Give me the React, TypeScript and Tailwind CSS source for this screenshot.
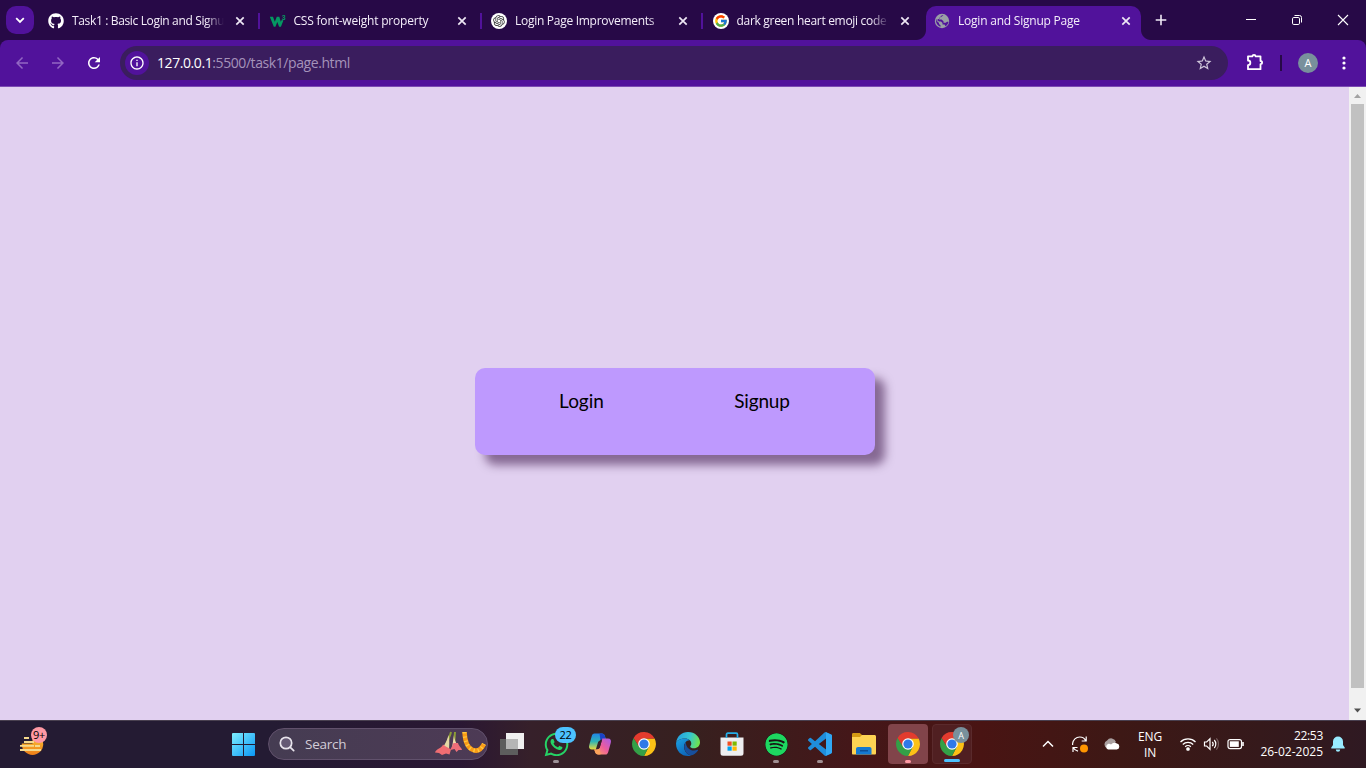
import type { ReactNode } from "react";
import { FaGithub, FaSpotify, FaWhatsapp } from "react-icons/fa";
import { FcGoogle } from "react-icons/fc";
import { RiOpenaiFill } from "react-icons/ri";
import { MdArrowBack, MdArrowForward, MdRefresh, MdInfoOutline, MdStarBorder } from "react-icons/md";

function Cross({ className }: { className: string }) {
  return (
    <svg className={className} viewBox="0 0 16 16" fill="none" stroke="currentColor" strokeWidth="1.7">
      <path d="M4.3 4.3 11.7 11.7M11.7 4.3 4.3 11.7" />
    </svg>
  );
}

function Globe() {
  return (
    <svg className="size-4" viewBox="0 0 16 16">
      <circle cx="8" cy="8" r="7.2" fill="#9aa0a6" />
      <path d="M9.500 2.300H8L6.500 3.500v1.300H5v1.700H7.500l2 1.700v1.500h2.300l1.200-1h1.500c-.3 1.900-1.400 3.600-3 4.500l-1-1.800H8.500V10L7 8.500H5L2 6.300C1.600 9.500 3.300 12.700 6.500 13.700v-1.500L5 11v-1L2.300 7.500z" fill="#51129b" />
    </svg>
  );
}

function W3() {
  return (
    <svg className="h-4 w-[17px] overflow-visible" viewBox="0 0 17 16">
      <path d="M.8 3.800H4l1.800 5 2-5h2.500l1.500 5 1-2.100 1.600.9-2.500 6.100h-1.800L8.300 9.100l-1.900 4.600H4.800z" fill="#059862" />
      <text x="12.800" y="7" fontSize="7" fontWeight="700" fill="#059862" fontFamily="Liberation Sans, sans-serif">3</text>
    </svg>
  );
}

function Tab({ icon, title, divider, tracking }: { icon: ReactNode; title: string; divider?: boolean; tracking: string }) {
  return (
    <div className="flex h-[34px] w-[221.5px] shrink-0 items-center pb-[5px] pl-[9px]">
      <span className="flex size-4 shrink-0 items-center justify-center">{icon}</span>
      <span className={`ml-2 w-[153px] whitespace-nowrap text-[12px] font-medium leading-4 text-[#f4eefa] [mask-image:linear-gradient(to_right,#000_134px,transparent_152px)] ${tracking}`}>
        {title}
      </span>
      <Cross className="ml-[7px] size-4 shrink-0 text-[#eee7f5]" />
      {divider && <span className="ml-[10px] h-4 w-[2px] shrink-0 bg-[#51129b]" />}
    </div>
  );
}

function TabStrip() {
  return (
    <div className="flex h-10 bg-[#270947] pt-[6px]">
      <button className="ml-[6px] mr-[5px] flex size-7 shrink-0 items-center justify-center rounded-[10px] bg-[#51129b]">
        <svg className="size-4" viewBox="0 0 16 16" fill="none" stroke="#fff" strokeWidth="1.8"><path d="m4.2 6.2 3.8 3.7 3.8-3.7" /></svg>
      </button>
      <Tab icon={<FaGithub className="size-4 text-white" />} title="Task1 : Basic Login and Signu" divider tracking="tracking-[-0.35px]" />
      <Tab icon={<W3 />} title="CSS font-weight property" divider tracking="tracking-[-0.2px]" />
      <Tab
        icon={<span className="flex size-4 items-center justify-center rounded-full bg-white"><RiOpenaiFill className="size-3.5 text-[#333]" /></span>}
        title="Login Page Improvements" divider tracking="tracking-[-0.28px]"
      />
      <Tab
        icon={<span className="flex size-4 items-center justify-center rounded-full bg-white"><FcGoogle className="size-[14px]" /></span>}
        title="dark green heart emoji code" tracking="tracking-[-0.3px]"
      />
      <div className="relative ml-px w-[215px] shrink-0 rounded-t-[10px] bg-[#51129b]">
        <div className="absolute bottom-0 left-[-10px] size-[10px] bg-[radial-gradient(circle_at_0_0,transparent_9.5px,#51129b_10.5px)]" />
        <div className="absolute bottom-0 right-[-10px] size-[10px] bg-[radial-gradient(circle_at_100%_0,transparent_9.5px,#51129b_10.5px)]" />
        <div className="-ml-px"><Tab icon={<Globe />} title="Login and Signup Page" tracking="tracking-[-0.22px]" /></div>
      </div>
      <svg className="ml-3 mt-[6px] size-4 shrink-0" viewBox="0 0 16 16" stroke="#f0eaf6" strokeWidth="1.6"><path d="M8 2.700v10.600M2.700 8h10.600" /></svg>
      <div className="ml-auto flex h-7 shrink-0 items-center text-white">
        <svg className="h-7 w-[46px]" viewBox="0 0 46 28" stroke="currentColor"><path d="M18 13.500h10" /></svg>
        <svg className="h-7 w-[46px]" viewBox="0 0 46 28" stroke="currentColor" fill="none"><rect x="18.500" y="11.500" width="7" height="7" rx="1.300" /><path d="M20.500 9.500h5a2 2 0 0 1 2 2v5" /></svg>
        <svg className="h-7 w-[46px]" viewBox="0 0 46 28" stroke="currentColor" strokeWidth="1.100"><path d="m18 9 10 10M28 9 18 19" /></svg>
      </div>
    </div>
  );
}

function Toolbar() {
  return (
    <div className="bg-[#270947]">
      <div className="flex h-[47px] items-center rounded-t-[8px] border-b border-[#7c4bb3] bg-[#51129b]">
        <MdArrowBack className="ml-[13px] size-[18px] text-[#9267c3]" />
        <MdArrowForward className="ml-[18px] size-[18px] text-[#9267c3]" />
        <MdRefresh className="ml-[18px] size-[18px] text-white" />
        <div className="ml-[17px] flex h-[34px] w-[1108px] items-center rounded-full bg-[#3a1d5e] pl-[5px]">
          <span className="flex size-6 items-center justify-center rounded-full bg-[#51129b]">
            <MdInfoOutline className="size-4 text-white" />
          </span>
          <span className="ml-2 whitespace-nowrap text-[14px] leading-5 tracking-[-0.42px] text-[#a593ba]">
            <span className="text-white">127.0.0.1</span>:5500/task1/page.html
          </span>
          <MdStarBorder className="ml-auto mr-[15px] size-[18px] text-[#cfc5da]" />
        </div>
        <svg className="ml-[17px] size-5" viewBox="0 0 20 20" fill="none" stroke="#fff" strokeWidth="1.800" strokeLinejoin="round">
          <path d="M3 3.300h4.500a1.500 1.500 0 0 1 3 0h5v4.700a1.600 1.600 0 0 1 0 3.200v5H3v-4a2.300 2.300 0 0 0 0-4.700z" />
        </svg>
        <span className="ml-[15px] h-4 w-[2px] bg-[#270947]" />
        <span className="ml-4 flex size-5 items-center justify-center rounded-full bg-[#78909c] pb-px text-[11px] leading-none text-white">A</span>
        <svg className="ml-[18px] size-4" viewBox="0 0 16 16" fill="#fff"><circle cx="8" cy="3" r="1.600" /><circle cx="8" cy="8" r="1.600" /><circle cx="8" cy="13" r="1.600" /></svg>
      </div>
    </div>
  );
}

function Chrome() {
  return (
    <svg className="size-6" viewBox="0 0 24 24">
      <path d="M12 6.400h10.600A12 12 0 0 1 12 24l4.800-9.200z" fill="#fbc116" />
      <path d="M1.610 6 7.200 14.800l4.800 2.800 4.800-2.800L12 24A12 12 0 0 1 1.610 6z" fill="#34a047" />
      <path d="M1.610 6A12 12 0 0 1 22.600 6.400H12L7.200 14.800z" fill="#e33b2e" />
      <circle cx="12" cy="12" r="5.800" fill="#fff" />
      <circle cx="12" cy="12" r="4.600" fill="#3079e8" />
    </svg>
  );
}

function Edge() {
  return (
    <svg className="size-6" viewBox="0 0 24 24">
      <defs>
        <linearGradient id="edgeTop" x1="0" y1="0.3" x2="1" y2="0.5"><stop offset="0" stopColor="#249fe0" /><stop offset=".55" stopColor="#35c6cf" /><stop offset="1" stopColor="#70e34a" /></linearGradient>
        <linearGradient id="edgeBody" x1="0" y1="0" x2="0.6" y2="1"><stop offset="0" stopColor="#1ba1e2" /><stop offset="1" stopColor="#0d65b8" /></linearGradient>
      </defs>
      <path d="M.1 10.800C.7 4.500 5.800 0 12 0c7 0 12 5 12 10.300 0 3.700-2.800 6-6 6-2.300 0-3.800-.8-3.800-1.800 0-.7 1.100-1.200 1.100-3 0-2.600-2.600-5-6.300-5C4.800 6.500 1.200 8.200.1 10.800z" fill="url(#edgeTop)" />
      <path d="M.1 10.800C1.200 8.200 4.800 6.500 8.800 6.500c2 0 3.600.7 4.800 1.700-2.800-.2-5.600 2.800-5.600 6.600 0 4.200 3.300 8.300 7.500 8.700-1.100.4-2.300.5-3.500.5C5 24-.5 18.200.1 10.800z" fill="url(#edgeBody)" />
      <path d="M9.800 10.200C7 13.500 8 20 12.500 22.500c3 1.700 6.500.2 9.500-4.100.3-.5-.1-.8-.6-.6-5.300 2.400-11.400-1-11.600-7.600z" fill="#174f9c" />
    </svg>
  );
}

function Copilot() {
  return (
    <svg className="size-6" viewBox="0 0 24 24">
      <defs>
        <linearGradient id="cpA" x1="0" y1="0" x2="0" y2="1"><stop offset="0" stopColor="#2086e8" /><stop offset=".5" stopColor="#2fb3b5" /><stop offset="1" stopColor="#ecd93b" /></linearGradient>
        <linearGradient id="cpB" x1="1" y1="0" x2="0" y2="1"><stop offset="0" stopColor="#a55bea" /><stop offset=".5" stopColor="#ed5c9c" /><stop offset="1" stopColor="#ffac5a" /></linearGradient>
      </defs>
      <path d="M6.500 1.500h7.300c1.800 0 2.600.9 3.100 2.500L18 8h-2.800c-1.800 0-2.700.8-3.200 2.500L9.700 17.500H4c-2.500 0-3.500-1.800-2.800-4.200l2.500-9C4.200 2.400 5 1.500 6.500 1.500z" fill="url(#cpA)" />
      <path d="M11.500 1.500h2.300c1.800 0 2.600.9 3.100 2.500L18 8h-2.800c-1.200 0-2 .4-2.600 1.200z" fill="#1b42c8" />
      <path d="M17.500 22.500h-7.300c-1.800 0-2.600-.9-3.100-2.500l-.9-2.500h2.600c1.800 0 2.700-.8 3.200-2.500L14.300 6.500H20c2.500 0 3.500 1.800 2.800 4.200l-2.500 9c-.5 1.900-1.300 2.800-2.800 2.800z" fill="url(#cpB)" />
      <path d="m10.200 9.800 1-.9c1-.9 2-1.300 3-1.300l-2.400 7.500c-.5 1.600-1.300 2.200-2.600 2.400H7.800z" fill="#35202a" />
      <path d="M12.500 22.500h-2.300c-1.800 0-2.600-.9-3.100-2.500l-.9-2.500h2.600c1.300 0 2.200-.4 2.700-1.400z" fill="#fba35a" />
    </svg>
  );
}

function Store() {
  return (
    <svg className="mr-px h-6 w-6" viewBox="0 0 24 24">
      <path d="M.5 5.500h23v15.700a2.500 2.500 0 0 1-2.500 2.500H3a2.500 2.500 0 0 1-2.500-2.500z" fill="#eeeef0" />
      <path d="M6.500 6V2.500c0-.8.500-1.300 1.300-1.300h8.400c.8 0 1.300.5 1.300 1.300V6" fill="none" stroke="#25aee8" strokeWidth="1.700" />
      <path d="M7.500 9.500h4.200v4.200H7.500z" fill="#f25022" /><path d="M12.500 9.500h4.200v4.200h-4.200z" fill="#7fba00" />
      <path d="M7.500 14.500h4.200v4.200H7.500z" fill="#00a4ef" /><path d="M12.500 14.500h4.200v4.200h-4.200z" fill="#ffb900" />
    </svg>
  );
}

function Folder() {
  return (
    <svg className="size-6" viewBox="0 0 24 24">
      <path d="M0 2.500C0 1.700.5 1 1.300 1h6.500L10 3v5H0z" fill="#d49a14" />
      <path d="M0 5h8l2-2h12.500c.9 0 1.500.6 1.500 1.500v17c0 .5-.5 1-1 1H1c-.6 0-1-.5-1-1z" fill="#fdd353" />
      <path d="M4 22.500V17c0-1.200.8-2 2-2h11.500c1.200 0 2 .8 2 2v5.500z" fill="#1479d1" /><path d="M8 18h8v1.500H8z" fill="#0b4f98" />
    </svg>
  );
}

function Code() {
  return (
    <svg className="size-6" viewBox="0 0 24 24" fill="#1f8ddb">
      <path d="M23.15 2.587L18.21.21a1.494 1.494 0 0 0-1.705.29l-9.46 8.63-4.12-3.128a.999.999 0 0 0-1.276.057L.327 7.261A1 1 0 0 0 .326 8.74L3.899 12 .326 15.26a1 1 0 0 0 .001 1.479L1.65 17.94a.999.999 0 0 0 1.276.057l4.12-3.128 9.46 8.63a1.492 1.492 0 0 0 1.704.29l4.942-2.377A1.5 1.5 0 0 0 24 20.06V3.939a1.5 1.5 0 0 0-.85-1.352zm-5.146 14.861L10.826 12l7.178-5.448v10.896z" />
      <path d="m18 .2 5.100 2.400c.6.300.9.800.9 1.400v16c0 .6-.3 1.100-.9 1.400L18 23.800z" fill="#30a8f4" />
    </svg>
  );
}

function Weather() {
  return (
    <svg className="size-6" viewBox="0 0 24 24">
      <defs><linearGradient id="sun" x1="0" y1="0" x2="0" y2="1"><stop offset="0" stopColor="#fccb38" /><stop offset="1" stopColor="#ee7e18" /></linearGradient></defs>
      <circle cx="12.500" cy="12.300" r="10.700" fill="url(#sun)" />
      <path d="M0 0h12.500v11.500H0z" fill="#241b33" />
      <path d="M4 6h5M4 10h10M15 14h5M0 13.800h14M0 18h21" stroke="#f5d98c" strokeWidth="1.800" />
    </svg>
  );
}

function Flowers() {
  return (
    <svg className="h-7 w-[52px]" viewBox="0 0 52 28" fill="none">
      <path d="M16 2c-1 5-4 9-6 16M20 2l-1 14" stroke="#8c9c35" strokeWidth="2" />
      <path d="M13.500 5c1.500 5 .500 11 .5 17l-6-1-5 1c5-4 8.500-9 10.500-17z" fill="#e5d8a4" />
      <path d="M8 14.500c-1 3.500-7 4.500-8 8l4 .5 3 2 4-1.500 3.500 1 1.500-5c-1-1-4-2-8-5z" fill="#f06d72" />
      <path d="M19 5c0 5 3 9 5 13h-7z" fill="#eedcad" />
      <path d="M18.500 13c-1 3-3 5-3 7l4-1 2 3 2-2 3.500 0c0-2-3.500-4-4-7z" fill="#ee6e79" />
      <path d="M29.500 2c.5 10 3 16 8.500 18 5 2 8.500-1 11-6" stroke="#f99b16" strokeWidth="4.500" />
      <path d="M29.500 2c.5 10 3 16 8.500 18 5 2 8.500-1 11-6" stroke="#ffc940" strokeWidth="4" strokeDasharray="1.300 3" />
    </svg>
  );
}

function Slot({ children, box, mark }: { children: ReactNode; box?: string; mark?: string }) {
  return (
    <div className={`relative flex size-10 shrink-0 items-center justify-center rounded-[4px] ${box ?? ""}`}>
      {children}
      {mark && <span className={`absolute bottom-px h-[3px] rounded-full ${mark}`} />}
    </div>
  );
}

function Taskbar() {
  return (
    <div className="flex h-12 items-center border-t border-[#494050] bg-[linear-gradient(90deg,#241b33_0,#241b33_270px,#2a1733_460px,#36202a_530px,#37201f_690px,#441719_850px,#491413_980px,#3d1815_1120px,#35191b_1260px,#2f1922_1366px)] pb-px text-white">
      <div className="relative ml-5 size-6">
        <Weather />
        <span className="absolute left-[11px] top-[-5px] flex size-4 items-center justify-center rounded-full bg-[#ff99a4] pb-px text-[11px] leading-none tracking-[-0.300px] text-black">9+</span>
      </div>
      <div className="ml-[180px] flex items-center gap-1">
        <Slot>
          <svg className="mr-px size-[23px]" viewBox="0 0 23 23">
            <defs><linearGradient id="win" x1="0" y1="0" x2="1" y2="1"><stop offset="0" stopColor="#7eeeff" /><stop offset="1" stopColor="#0a96f5" /></linearGradient></defs>
            <path d="M1 0h10v11H0V1a1 1 0 0 1 1-1zM12 0h10a1 1 0 0 1 1 1v10H12zM0 12h11v11H1a1 1 0 0 1-1-1zM12 12h11v10a1 1 0 0 1-1 1H12z" fill="url(#win)" />
          </svg>
        </Slot>
        <div className="flex h-8 w-[220px] items-center rounded-full border border-[#61516c] bg-[linear-gradient(90deg,#453c52,#4d3a55)] pl-[9px]">
          <svg className="size-[18px]" viewBox="0 0 18 18" fill="#655974" stroke="#e8e4ec" strokeWidth="1.700"><circle cx="8" cy="8" r="5.700" /><path d="m12.300 12.300 3.400 3.400" strokeLinecap="round" /></svg>
          <span className="ml-[9px] text-[13.500px] leading-5 tracking-[-0.250px] text-[#d2ccd7]">Search</span>
          <span className="ml-auto"><Flowers /></span>
        </div>
        <Slot>
          <svg className="size-6" viewBox="0 0 24 24"><path d="M6 1h18v16H6z" fill="#efefef" /><path d="M0 7h18v16H0z" fill="#5d5d5d" /><path d="M6 7h12v10H6z" fill="#b5b5b5" /></svg>
        </Slot>
        <Slot mark="w-[6px] bg-[#9d9297]">
          <FaWhatsapp className="size-[27px] text-[#25d366]" />
          <span className="absolute left-[19px] top-[3px] flex h-4 w-[21px] items-center justify-center rounded-full bg-[#4cc2ff] pb-px text-[11px] leading-none tracking-[-0.300px] text-black">22</span>
        </Slot>
        <Slot><Copilot /></Slot>
        <Slot><Chrome /></Slot>
        <Slot><Edge /></Slot>
        <Slot><Store /></Slot>
        <Slot mark="w-[6px] bg-[#a08f92]"><FaSpotify className="size-[23px] rounded-full bg-[#191414] text-[#1ed760]" /></Slot>
        <Slot mark="w-[6px] bg-[#a08f92]"><Code /></Slot>
        <Slot><Folder /></Slot>
        <Slot box="bg-[#81444a]" mark="w-[6px] bg-[#ff99a4]"><Chrome /></Slot>
        <Slot box="border border-[#5a2a2c] bg-[#501f21]" mark="w-4 bg-[#4cc2ff]">
          <Chrome />
          <span className="absolute right-[2px] top-[2px] flex size-4 items-center justify-center rounded-full bg-[#78909c] text-[9px] leading-none text-white">A</span>
        </Slot>
      </div>
      <svg className="ml-[68px] size-4 shrink-0" viewBox="0 0 16 16" fill="none" stroke="#fff" strokeWidth="1.500"><path d="m3 10.500 5-5 5 5" /></svg>
      <svg className="ml-[15px] size-[18px] shrink-0" viewBox="0 0 18 18" fill="none" stroke="#fff" strokeWidth="1.200">
        <path d="M1.600 10V8.500C2 4.800 5 2 8.700 2c2.800 0 5 1.500 6 3.800M15.200 1.500V6h-4.500M2 17v-4.500h4.500M2.500 13c1 1.800 2.300 2.700 4.500 3.200" />
        <circle cx="13" cy="13.500" r="4" fill="#ff9500" stroke="none" />
      </svg>
      <svg className="ml-[14px] h-4 w-[18px] shrink-0" viewBox="0 0 18 16">
        <path d="M4 12a4 4 0 0 1 .1-7.500A5 5 0 0 1 13 6l-6 6z" fill="#aaa0a0" />
        <path d="M5 13.500a3 3 0 0 1 0-5.500c1-.4 2.200-.2 3 .4a4.600 4.600 0 0 1 6-.8 3 3 0 0 1-.3 5.900z" fill="#fff" />
      </svg>
      <span className="ml-[12px] w-[34px] shrink-0 pt-px text-center text-[12px] leading-4 tracking-[-0.200px]">ENG<br />IN</span>
      <svg className="ml-[12px] h-4 w-[18px] shrink-0" viewBox="0 0 18 16" fill="none" stroke="#fff" strokeWidth="1.300">
        <path d="M1.500 6a10.600 10.600 0 0 1 15 0M3.800 8.500a7.300 7.300 0 0 1 10.400 0M6.200 10.800a4 4 0 0 1 5.600 0" /><circle cx="9" cy="13" r="1.200" fill="#fff" />
      </svg>
      <svg className="ml-[6px] h-4 w-[18px] shrink-0" viewBox="0 0 18 16" fill="none" stroke="#fff" strokeWidth="1.200">
        <path d="M1.500 6h2.200L7 2.700v10.600L3.700 10H1.500zM9.300 5.800c1 1.200 1 3.200 0 4.400M11.300 4c2 2.200 2 5.800 0 8" /><path d="M13.400 2.300c2.800 3 2.800 8.400 0 11.400" stroke="#785f60" />
      </svg>
      <svg className="ml-[6px] h-4 w-[18px] shrink-0" viewBox="0 0 18 16" fill="none" stroke="#fff" strokeWidth="1.200">
        <rect x="1" y="3.600" width="13.500" height="9" rx="2" /><rect x="2.800" y="5.300" width="9" height="5.600" fill="#fff" stroke="none" /><path d="M16 6v4" strokeWidth="1.600" />
      </svg>
      <span className="ml-auto shrink-0 text-right text-[12px] leading-4"><span className="tracking-[-0.300px]">22:53</span><br />26-02-2025</span>
      <svg className="ml-[7px] mr-5 size-4 shrink-0" viewBox="0 0 16 16" fill="#99ebff">
        <path d="M8 .5a5 5 0 0 1 5 5V9l1.700 2.500c.3.500 0 1-.6 1H1.900c-.6 0-.9-.5-.6-1L3 9V5.500a5 5 0 0 1 5-5zM5.800 13.500h4.400a2.200 2.200 0 0 1-4.400 0z" />
      </svg>
    </div>
  );
}

export default function App() {
  return (
    <div className="flex h-[768px] w-[1366px] flex-col overflow-hidden font-['Open_Sans','Noto_Sans',sans-serif]">
      <TabStrip />
      <Toolbar />
      <main className="flex min-h-0 flex-1 bg-[#e1d0f0]">
        <div className="flex flex-1 justify-center pt-[281px]">
          <div className="grid h-[87px] w-[400px] grid-cols-[214px_147px] rounded-[10px] bg-[#be99fe] pt-[19px] text-center font-['Lato','Open_Sans',sans-serif] text-[19px] leading-7 text-black shadow-[10px_10px_10px_rgba(44,4,56,0.5)]">
            <span>Login</span>
            <span className="tracking-[-0.200px]">Signup</span>
          </div>
        </div>
        <div className="flex w-[17px] flex-col items-center bg-[#f1f1f1]">
          <svg className="h-[17px] w-[17px] shrink-0" viewBox="0 0 17 17"><path d="m5 11 3.500-4 3.500 4z" fill="#a3a3a3" /></svg>
          <div className="h-[584px] w-[13px] bg-[#c1c1c1]" />
          <svg className="mt-[14px] h-[17px] w-[17px] shrink-0" viewBox="0 0 17 17"><path d="m5 6.500 3.500 4 3.500-4z" fill="#505050" /></svg>
        </div>
      </main>
      <Taskbar />
    </div>
  );
}
